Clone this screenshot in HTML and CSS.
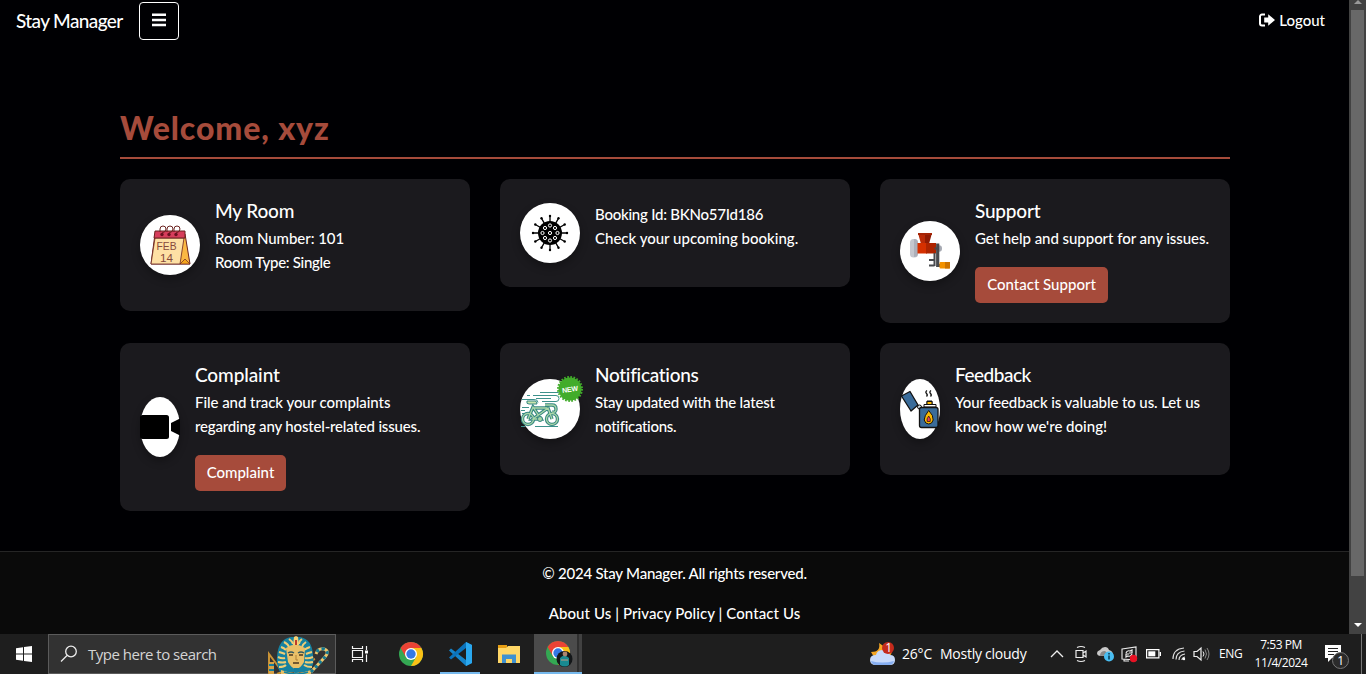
FILE: index.html
```
<!DOCTYPE html>
<html lang="en">
<head>
<meta charset="utf-8">
<title>Stay Manager</title>
<link rel="stylesheet" href="styles.css">
</head>
<body>
<div class="viewport">
  <div class="page">
    <header class="navbar">
      <span class="brand">Stay Manager</span>
      <button class="menu" aria-label="Menu"><svg width="16" height="16" viewBox="0 0 16 16"><path d="M1 2.800h14M1 7.900h14M1 13h14" stroke="#fff" stroke-width="2.500"/></svg></button>
      <a class="logout"><svg width="16" height="14" viewBox="0 0 16 14"><path d="M6 1.500H3a2 2 0 0 0-2 2v7a2 2 0 0 0 2 2h3" fill="none" stroke="#fff" stroke-width="2"/><path d="M5.200 4.500h4V1.200L16 7l-6.800 5.800V9.500h-4z" fill="#fff"/></svg><span>Logout</span></a>
    </header>
    <main class="main">
      <h1 class="welcome"><span>Welcome, xyz</span></h1>
      <section class="grid">
        <article class="card">
          <div class="pic"><svg width="60" height="60" viewBox="0 0 60 60">
            <path d="M15 19h30l5 30H11z" fill="#fbb843" stroke="#6b2320"/>
            <path d="M15 23h29l-4 26H11z" fill="#fee0a4" stroke="#6b2320" stroke-width=".8"/>
            <path d="M15 16h30v7H14z" fill="#d63d5b" stroke="#6b2320"/>
            <path d="M40 49l5-5 5 5z" fill="#f4a51d" stroke="#6b2320" stroke-width=".7"/>
            <g fill="none" stroke="#6b2320" stroke-width="1"><path d="M20 17v-3a3 3 0 0 1 6 0q0 3-4 4M27 17v-3a3 3 0 0 1 6 0q0 3-4 4M34 17v-3a3 3 0 0 1 6 0q0 3-4 4"/></g>
            <g fill="#6b1020"><circle cx="22" cy="19.500" r="1.700"/><circle cx="29" cy="19.500" r="1.700"/><circle cx="36" cy="19.500" r="1.700"/></g>
            <text class="cal" x="16.500" y="35" textLength="20" lengthAdjust="spacingAndGlyphs">FEB</text><text class="cal" x="20" y="46.500" textLength="13" lengthAdjust="spacingAndGlyphs">14</text>
          </svg></div>
          <div class="body"><h5 class="t-room">My Room</h5><p><span class="l-num">Room Number: 101</span><br><span class="l-type">Room Type: Single</span></p></div>
        </article>
        <article class="card">
          <div class="pic"><svg width="60" height="60" viewBox="0 0 60 60">
            <g stroke="#000" stroke-width="1.300"><path d="M30 13v34M13 30h34M21.500 15.300l17 29.400M38.500 15.300l-17 29.400M15.300 21.500l29.400 17M15.300 38.500l29.400-17"/></g>
            <g><circle cx="30" cy="30" r="12"/><circle cx="30" cy="13" r="1.200"/><circle cx="30" cy="47" r="1.200"/><circle cx="13" cy="30" r="1.200"/><circle cx="47" cy="30" r="1.200"/><circle cx="21.500" cy="15.300" r="1.200"/><circle cx="38.500" cy="15.300" r="1.200"/><circle cx="21.500" cy="44.700" r="1.200"/><circle cx="38.500" cy="44.700" r="1.200"/><circle cx="15.300" cy="21.500" r="1.200"/><circle cx="15.300" cy="38.500" r="1.200"/><circle cx="44.700" cy="21.500" r="1.200"/><circle cx="44.700" cy="38.500" r="1.200"/></g>
            <g fill="#000" stroke="#fff" stroke-width="1"><circle cx="30" cy="30" r="1.600"/><circle cx="22.500" cy="30" r="1.600"/><circle cx="37.500" cy="30" r="1.600"/><circle cx="30" cy="22.500" r="1.600"/><circle cx="30" cy="37.500" r="1.600"/><circle cx="25" cy="25" r="1.600"/><circle cx="35" cy="25" r="1.600"/><circle cx="25" cy="35" r="1.600"/><circle cx="35" cy="35" r="1.600"/></g>
          </svg></div>
          <div class="body"><h5></h5><p><span class="l-id">Booking Id: BKNo57Id186</span><br><span class="l-check">Check your upcoming booking.</span></p></div>
        </article>
        <article class="card">
          <div class="pic"><svg width="60" height="60" viewBox="0 0 60 60">
            <rect x="10" y="18" width="8" height="18.500" rx="3.500" fill="#c5c7ce"/><path d="M14 18a4 4 0 0 1 4 4v10a4 4 0 0 1-4 4z" fill="#adb0ba"/>
            <path d="M18 12h8v11h-5z" fill="#b92b08"/><path d="M25 12h7l-3 11h-4z" fill="#8f1c05"/><path d="M18 12h14v2H18z" fill="#a52507"/>
            <path d="M17.500 22H27v10.500h-9.500z" fill="#d53000"/><path d="M26 22h10v10.500H26z" fill="#ad2400"/>
            <ellipse cx="39" cy="27.500" rx="3" ry="3.200" fill="#a6a9b2"/>
            <path d="M37.700 22.500V44.500H41" fill="none" stroke="#484a4e" stroke-width="3.200"/><path d="M34.500 32v13M34.500 44.500H29M34.500 39H29M34.500 27.500h4" fill="none" stroke="#484a4e" stroke-width="2"/>
            <rect x="39.500" y="41" width="10.500" height="6.500" rx="1" fill="#f39200"/><path d="M45 41h5v6.500h-5z" fill="#cc7300"/>
          </svg></div>
          <div class="body"><h5 class="t-support">Support</h5><p><span class="l-help">Get help and support for any issues.</span></p><a class="btn btn-support"><span>Contact Support</span></a></div>
        </article>
        <article class="card">
          <div class="pic narrow"><svg width="40" height="60" viewBox="0 0 40 60"><rect x="0" y="18" width="29" height="24" rx="2.500"/><path d="M31 26l9-4.500v17L31 34z"/></svg></div>
          <div class="body"><h5 class="t-comp">Complaint</h5><p><span class="l-file">File and track your complaints</span><br><span class="l-reg">regarding any hostel-related issues.</span></p><a class="btn btn-comp"><span>Complaint</span></a></div>
        </article>
        <article class="card">
          <div class="pic"><svg width="60" height="60" viewBox="0 0 60 60">
            <g fill="none" stroke="#3d918b" stroke-width="1"><path d="M20 13.500h18q2 0 2-2M7 16.500h3m3 0h23q3 0 3 3t-3 3H22M16 19.500h15M2 20.500h12q4 0 4 3M2 28.500h7M1 31.500h4M1 47.500h4m10 0h23M2 34.500h4"/></g>
            <g fill="none"><g stroke="#368782" stroke-width="3.400"><circle cx="8" cy="40" r="5.500"/><circle cx="32" cy="40" r="5.500"/><path d="M8 40l5-12 8 12h-8l15-11 4 11M13 29h14M25 26h7q4 0 4 4t-4 3"/></g>
            <g stroke="#a9d6a8" stroke-width="1.300"><circle cx="8" cy="40" r="5.500"/><circle cx="32" cy="40" r="5.500"/><path d="M8 40l5-12 8 12h-8l15-11 4 11M13 29h14M25 26h7q4 0 4 4t-4 3"/></g></g>
            <path d="M7 22h8q2 0 2 3H9q-3 0-2-3z" fill="#c9e4ad" stroke="#368782"/><circle cx="20" cy="40" r="2.500" fill="#a9d6a8" stroke="#368782"/>
          </svg><svg class="new" width="26" height="26" viewBox="0 0 26 26"><circle cx="13" cy="13" r="11.500" fill="#42ac2b"/><circle cx="13" cy="13" r="12" fill="none" stroke="#42ac2b" stroke-width="2" stroke-dasharray="1.700 1.440"/><text x="5" y="15.800" textLength="16" transform="rotate(-8 13 13)">NEW</text></svg></div>
          <div class="body"><h5 class="t-notif">Notifications</h5><p><span class="l-stay">Stay updated with the latest</span><br><span class="l-notif">notifications.</span></p></div>
        </article>
        <article class="card">
          <div class="pic narrow"><svg width="40" height="60" viewBox="0 0 40 60">
            <path d="M1.500 17l8.500-4.500 8 13.500-7 6z" fill="#3a6c9a" stroke="#111" stroke-width="1.300" stroke-linejoin="round"/><circle cx="19.500" cy="28" r="2" fill="#d8e4ed" stroke="#111"/>
            <path d="M24 28v-2.500h3V22h5v3.500h4V28z" fill="#fff" stroke="#111"/><path d="M27 22.500h5v3h-5z" fill="#fdb900" stroke="#111"/>
            <rect x="19.500" y="28.500" width="18.500" height="20" rx="2" fill="#3a6c9a" stroke="#111" stroke-width="1.300"/>
            <path d="M28.700 31.500q5 5 4.500 9.500-1 4-4.500 4t-4.500-4q0-4 4.500-9.500z" fill="#fdb900" stroke="#111"/><path d="M28.700 37q2.500 3 1.500 5.500h-3q-1-2.500 1.500-5.500z" fill="#ee4158" stroke="#111" stroke-width=".7"/>
            <path d="M27 11.500q-2 1.500-.5 3t0 3M31 11.500q-2 1.500-.5 3t0 3" fill="none" stroke="#111" stroke-width="1.300"/>
          </svg></div>
          <div class="body"><h5 class="t-feed">Feedback</h5><p><span class="l-your">Your feedback is valuable to us. Let us</span><br><span class="l-know">know how we're doing!</span></p></div>
        </article>
      </section>
    </main>
    <footer class="footer"><p><span class="f-copy">© 2024 Stay Manager. All rights reserved.</span></p><p><span class="f-links">About Us | Privacy Policy | Contact Us</span></p></footer>
  </div>
  <div class="scrollbar"><i class="up"></i><div class="thumb"></div><i class="down"></i></div>
</div>
<div class="taskbar">
  <div class="start"><svg width="16" height="16" viewBox="0 0 16 16"><path d="M0 2.300l7-1v6.200H0zM8 1.100L16 0v7.500H8zM0 8.500h7v6.200l-7-1zM8 8.500h8V16l-8-1.100z" fill="#fff"/></svg></div>
  <div class="search"><svg width="18" height="18" viewBox="0 0 18 18"><circle cx="11" cy="6.500" r="5.300" fill="none" stroke="#eee" stroke-width="1.300"/><path d="M7 10.500L1 16.500" stroke="#eee" stroke-width="1.300"/></svg><span class="s-text">Type here to search</span>
    <svg class="pharaoh" width="64" height="39" viewBox="0 0 64 39">
      <path d="M1 39V19l12 16M9 39l38-15" stroke="#c99336" stroke-width="2" fill="none"/><path d="M1 27h5v12H1z" fill="#d8a247"/><path d="M1 30h5M1 35h5" stroke="#147d9c" stroke-width="2"/>
      <path d="M12 37Q8 29 9 22 10 4 23 2h9q12 2 13 18 2 10-4 17z" fill="#1681a0"/>
      <path d="M11 32q5 0 7-2M10 27q5 1 8 0M10 22q4 2 7 1M11 17q4 1 6 2M13 12q3 1 5 3M16 7q4 2 5 5M21 4q3 2 4 5M34 4q-3 2-3 5M38 7q-3 2-4 5M42 12q-3 1-6 3M44 17q-4 1-6 2M45 22q-5 2-8 1M45 27q-5 1-8 0M44 32q-5 0-8-2" fill="none" stroke="#f1cd75" stroke-width="2"/>
      <path d="M18 13q9-7 19 0l-1 14q-4 7-8 7t-8-7z" fill="#eac068"/><path d="M26 2l2-1 2 1 1 8h-6z" fill="#f7d276"/><path d="M27 5h2v5h-2z" fill="#be3b2c"/>
      <path d="M20 18q3-2 6 0M30 18q3-2 6 0" stroke="#355a60" stroke-width="1.500" fill="none"/><path d="M21 20h4M31 20h4M25 28h6" stroke="#4c3721" stroke-width="1.300"/><path d="M28 20v5h2" fill="none" stroke="#b18037"/><path d="M26 33h5v6h-5z" fill="#167d9d"/>
      <path d="M13 35q15 6 30 0v4H13z" fill="#eac068"/><path d="M16 37q13 4 24 0" fill="none" stroke="#1681a0" stroke-width="1.500"/>
      <path d="M43 37l14-15q5-6-1-8-6-1-8 5" fill="none" stroke="#edc66c" stroke-width="3"/><path d="M43 37l14-15q5-6-1-8-6-1-8 5" fill="none" stroke="#127996" stroke-width="3" stroke-dasharray="3 3"/>
    </svg></div>
  <div class="task view"><svg width="18" height="18" viewBox="0 0 18 18"><path d="M1.500 1v2.500h10V1M1.500 17v-2.500h10V17M1.500 5.500h10v7h-10zM15.500 1v4M15.500 9.500V17" fill="none" stroke="#f4f4f4" stroke-width="1.200"/><path d="M14 5.500h3v3h-3z" fill="#fff"/></svg></div>
  <div class="task"><svg width="24" height="24" viewBox="0 0 24 24"><circle cx="12" cy="12" r="12" fill="#34a853"/><path d="M1.600 6A12 12 0 0 1 22.400 6H12L6.800 15z" fill="#ea4335"/><path d="M22.400 6A12 12 0 0 1 12 24l5.200-9L12 6z" fill="#fbc116"/><circle cx="12" cy="12" r="6" fill="#fff"/><circle cx="12" cy="12" r="4.700" fill="#3478e5"/></svg></div>
  <div class="task running"><svg width="24" height="24" viewBox="0 0 24 24"><path d="M18 0l6 3v18l-6 3L1 8.500 3 6.500l15 11.500z" fill="#1685cb"/><path d="M18 6L3 17.500 1 15.500 18 0z" fill="#0b73bc"/><path d="M18 0l6 3v18l-6 3z" fill="#2aa8ef"/></svg></div>
  <div class="task files"><svg width="22" height="19" viewBox="0 0 22 19"><path d="M0 0h9v5H0z" fill="#e79e13"/><path d="M0 3h8l2-2h12v17H0z" fill="#ffd767"/><path d="M4 18V9.500h14V18h-4v-4H8v4z" fill="#3f91d1"/></svg></div>
  <div class="task running active"><svg width="28" height="26" viewBox="0 0 28 26"><circle cx="12" cy="12" r="12" fill="#34a853"/><path d="M1.600 6A12 12 0 0 1 22.400 6H12L6.800 15z" fill="#ea4335"/><path d="M22.400 6A12 12 0 0 1 12 24l5.200-9L12 6z" fill="#fbc116"/><circle cx="12" cy="12" r="6" fill="#fff"/><circle cx="12" cy="12" r="4.700" fill="#3478e5"/><circle cx="18.500" cy="18" r="8" fill="#141719"/><path d="M14 24v-7q4-5 9 0v7q-4 3-9 0z" fill="#198a91"/><circle cx="19" cy="13" r="2.400" fill="#ab8571"/><path d="M15 19h7" stroke="#c59a80"/></svg></div>
  <div class="tray">
    <svg class="weather" width="26" height="24" viewBox="0 0 26 24"><path d="M9 1q2 9-8 9 3 7 11 7t10-7z" fill="#f5a623"/><path d="M6 23q-6 0-6-5t6-5q1-5 7-5t7 5q5 0 5 5t-5 5z" fill="#c8dafa"/><path d="M1 19q11 3 23 0-1 4-5 4H6q-4 0-5-4z" fill="#86aef0"/><circle cx="18" cy="6" r="6" fill="#c42b1c"/><text x="15.200" y="10">1</text></svg>
    <span class="w-temp">26°C</span><span class="w-text">Mostly cloudy</span>
    <svg class="chev" width="14" height="8" viewBox="0 0 14 8"><path d="M1 7l6-6 6 6" fill="none" stroke="#eee" stroke-width="1.300"/></svg>
    <svg class="cam" width="12" height="18" viewBox="0 0 12 18"><path d="M1 5.500h7v7H1zM8 8l3-2v6l-3-2M2 2.500q4-2 8 0M2 15.500q4 2 8 0" fill="none" stroke="#eee" stroke-width="1.200"/></svg>
    <svg class="cloud" width="17" height="15" viewBox="0 0 17 15"><path d="M4 9q-4 0-4-3 0-2 3-3 2-3 5-3 3 0 4 3 4 1 4 5z" fill="#c9c9c9"/><path d="M3 9q0-5 5-5l5 4z" fill="#888"/><circle cx="12" cy="9.500" r="5" fill="#48bdf1"/><path d="M12 8.500v4M12 6v1.500" stroke="#063b53" stroke-width="1.500"/></svg>
    <svg class="sync" width="18" height="17" viewBox="0 0 18 17"><path d="M1 3l14-2v13L1 13zM3 13v2h5" fill="none" stroke="#eee" stroke-width="1.100"/><path d="M5 7q1-3 4-2l2-1v3H8M11 8q-1 3-4 2l-2 1V8h3" fill="none" stroke="#eee" stroke-width="1.200"/><circle cx="12.500" cy="12.500" r="3.700" fill="#e81123"/></svg>
    <svg class="bat" width="15" height="10" viewBox="0 0 15 10"><path d="M.6.600h12.300v8.300H.6zM14.400 3v4" fill="none" stroke="#fff" stroke-width="1.200"/><path d="M2.300 2.300h7v5h-7z" fill="#fff"/></svg>
    <svg class="wifi" width="14" height="14" viewBox="0 0 14 14"><g fill="none" stroke="#ddd" stroke-width="1.200"><path d="M1 12Q1 2 12 1M4 12.500Q4 5 12.500 4M7 13q0-5 6-6M10 13q0-2.500 3-3"/></g><circle cx="12" cy="12" r="1.200" fill="#fff"/></svg>
    <svg class="vol" width="17" height="14" viewBox="0 0 17 14"><path d="M1 4.500h3l4-3.500v12l-4-3.500H1z" fill="none" stroke="#eee" stroke-width="1.200"/><path d="M10 4.500q2 2.500 0 5" fill="none" stroke="#eee"/><path d="M12 2.500q3 4.500 0 9M14 1q4 6 0 12" fill="none" stroke="#888"/></svg>
    <span class="lang">ENG</span>
    <div class="clock"><span class="c-time">7:53 PM</span><span class="c-date">11/4/2024</span></div>
    <svg class="note" width="26" height="26" viewBox="0 0 26 26"><path d="M1 1h16v13H8l-4 4v-4H1z" fill="#fff"/><path d="M4 4.500h10M4 7.500h10M4 10.500h6" stroke="#222"/><circle cx="16.500" cy="16.500" r="8" fill="#2b2b2b" stroke="#777"/><text x="13.200" y="21">1</text></svg>
    <i class="peek"></i>
  </div>
</div>
</body>
</html>
```
FILE: styles.css
```
* { box-sizing: border-box; }
body { margin: 0; width: 1366px; height: 674px; overflow: hidden; background: #000003; color: #fff; font: 15px/24px Lato, sans-serif; font-weight: 500; white-space: nowrap; }
svg { display: block; flex: none; overflow: visible; }
p, h1, h5 { margin: 0; font-weight: inherit; }
.viewport { display: flex; height: 634px; }
.page { width: 1349px; display: flex; flex-direction: column; }
.navbar { display: flex; height: 42px; align-items: center; padding: 0 24px 0 16px; }
.brand { width: 123px; font-size: 19px; letter-spacing: -.62px; }
.menu { width: 40px; height: 38px; border: 1px solid #fff; border-radius: 4px; background: none; padding: 0 1px 3px 0; display: flex; align-items: center; justify-content: center; }
.logout { display: flex; margin-left: auto; align-items: center; gap: 4px; padding-bottom: 2px; }
.main { padding: 68px 119px 0 120px; height: 509px; }
.welcome { width: 1110px; height: 49px; border-bottom: 2px solid #a64b3b; color: #a64b3b; font-size: 32px; line-height: 36px; font-weight: 900; letter-spacing: .9px; }
.grid { display: grid; grid-template-columns: repeat(3, 350px); gap: 20px 30px; align-items: start; margin-top: 20px; }
.card { display: flex; gap: 15px; align-items: center; padding: 20px; background: #1b1a1e; border-radius: 10px; }
.pic { position: relative; width: 60px; height: 60px; border-radius: 50%; background: #fff; box-shadow: 0 4px 8px rgba(0,0,0,.3); flex: none; }
.narrow { width: 40px; }
.narrow svg { fill: #000; }
.new { position: absolute; right: -3px; top: -3px; }
.new text { font: bold 7px "Liberation Sans", sans-serif; fill: #fff; }
.cal { font: 11px "Liberation Sans", sans-serif; fill: #86493b; }
.body h5 { font-size: 19px; line-height: 24px; margin: 0 0 3px; }
.body h5:empty { margin-bottom: 3px; }
.body p { margin-bottom: 17px; }
.t-room { letter-spacing: -.15px; }
.t-support { letter-spacing: -.2px; }
.t-comp { letter-spacing: -.1px; }
.t-notif { letter-spacing: -.3px; }
.t-feed { letter-spacing: -.5px; }
.l-num, .l-file, .l-help { letter-spacing: -.05px; }
.l-type { letter-spacing: -.3px; }
.l-id { letter-spacing: -.24px; }
.l-reg, .l-stay { letter-spacing: -.17px; }
.l-notif { letter-spacing: -.3px; }
.l-your { letter-spacing: -.1px; }
.f-copy { letter-spacing: -.23px; }
.f-links { letter-spacing: .08px; }
.btn { display: flex; align-items: center; justify-content: center; height: 36px; padding-bottom: 2px; border-radius: 5px; background: #a64b3b; }
.btn-support { width: 133px; }
.btn-comp { width: 91px; }
.footer { height: 83px; border-top: 1px solid #252525; background: #0a0a0a; padding-top: 9px; text-align: center; }
.footer p { margin-bottom: 16px; }
.scrollbar { width: 17px; background: #424242; display: flex; flex-direction: column; align-items: center; }
.up { margin-top: 0; border: 4px solid transparent; border-top: 0; border-bottom: 4px solid #999; }
.thumb { margin-top: 6px; width: 13px; height: 566px; background: #686868; }
.down { margin-top: 47px; border: 4px solid transparent; border-bottom: 0; border-top: 4px solid #fff; }
.taskbar { height: 40px; display: flex; background: #1e1e1e; font-family: "Open Sans", sans-serif; font-weight: 400; }
.start { width: 48px; display: flex; align-items: center; justify-content: center; }
.search { width: 288px; border: 1px solid #5b5b5b; background: #323232; display: flex; align-items: center; padding-left: 11px; }
.s-text { margin-left: 10px; width: 180px; color: #d4d4d4; font-size: 15px; letter-spacing: -.5px; }
.task { width: 49px; display: flex; align-items: center; justify-content: center; }
.view { width: 48px; margin-right: 2px; }
.running { width: 40px; margin: 0 5px; border-bottom: 2px solid #76b9ed; padding-top: 2px; }
.files { padding-right: 2px; }
.active { width: 48px; margin-left: 0; margin-right: 0; padding-left: 4px; background: linear-gradient(90deg, #4b4b4b 0 43px, #303030 43px 45px, #414141 45px); }
.tray { flex: 1; display: flex; align-items: center; }
.tray > * { flex: none; }
.weather { margin-left: 288px; width: 26px; }
.weather text, .note text { font: 12px "Open Sans", sans-serif; fill: #fff; }
.w-temp { margin-left: 6px; width: 38px; font-size: 14px; letter-spacing: -.2px; }
.w-text { width: 110px; font-size: 14px; letter-spacing: -.25px; }
.chev { margin-right: 11px; }
.cam { margin-right: 10px; }
.cloud { margin-right: 7px; }
.sync { margin-right: 7px; }
.bat { margin-right: 11px; }
.wifi { margin-right: 7px; }
.vol { margin-right: 9px; }
.lang { width: 32px; font-size: 12px; letter-spacing: -.4px; }
.clock { width: 60px; display: flex; flex-direction: column; align-items: center; font-size: 12px; line-height: 18px; letter-spacing: -.45px; }
.note { margin: 5px 0 0 13px; }
.peek { margin-left: auto; margin-right: 4px; width: 1px; height: 40px; background: #777; }
```
